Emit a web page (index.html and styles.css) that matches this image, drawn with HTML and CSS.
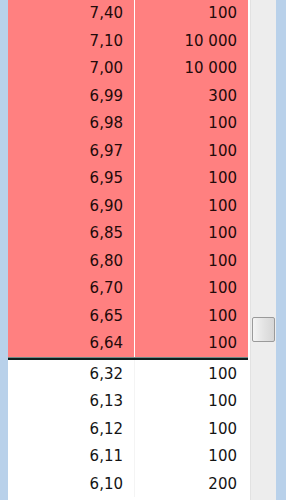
FILE: index.html
```html
<!DOCTYPE html>
<html lang="ru">
<head>
    <meta charset="UTF-8">
    <meta name="viewport" content="width=device-width, initial-scale=1.0">
    <title>Стакан</title>
    <link rel="stylesheet" href="styles.css">
</head>
<body>
    <div class="frame">
        <div class="book">
            <div class="rows asks">
                <div class="row"><span>7,40</span><span>100</span></div>
                <div class="row"><span>7,10</span><span>10 000</span></div>
                <div class="row"><span>7,00</span><span>10 000</span></div>
                <div class="row"><span>6,99</span><span>300</span></div>
                <div class="row"><span>6,98</span><span>100</span></div>
                <div class="row"><span>6,97</span><span>100</span></div>
                <div class="row"><span>6,95</span><span>100</span></div>
                <div class="row"><span>6,90</span><span>100</span></div>
                <div class="row"><span>6,85</span><span>100</span></div>
                <div class="row"><span>6,80</span><span>100</span></div>
                <div class="row"><span>6,70</span><span>100</span></div>
                <div class="row"><span>6,65</span><span>100</span></div>
                <div class="row"><span>6,64</span><span>100</span></div>
            </div>
            <div class="spread"></div>
            <div class="rows bids">
                <div class="row"><span>6,32</span><span>100</span></div>
                <div class="row"><span>6,13</span><span>100</span></div>
                <div class="row"><span>6,12</span><span>100</span></div>
                <div class="row"><span>6,11</span><span>100</span></div>
                <div class="row"><span>6,10</span><span>200</span></div>
            </div>
        </div>
        <div class="scrollbar">
            <div class="thumb"></div>
        </div>
    </div>
</body>
</html>
```
FILE: styles.css
```css
body {
    margin: 0;
    height: 500px;
    overflow: hidden;
    background-color: #b9d1ea;
    font-family: "DejaVu Sans", Verdana, sans-serif;
    font-size: 15px;
    color: #141414;
}
.frame {
    display: flex;
    margin-left: 8px;
    width: 268px;
    height: 500px;
    background-color: #fff;
}
.book {
    width: 240px;
    margin-top: -1px;
}
.row {
    display: grid;
    grid-template-columns: 127px 113px;
    height: 27.5px;
}
.row span {
    text-align: right;
    padding: 1px 11px 0 0;
    line-height: 26.5px;
}
.row span:first-child {
    border-right: 1px solid #fff;
}
.asks .row {
    background-color: #ff8080;
    color: #220a0a;
}
.bids .row span:first-child {
    border-right-color: #f4f4f4;
}
/* граница между продажей и покупкой */
.spread {
    height: 1px;
    background-color: #6f8a86;
    border-bottom: 2px solid #0f1f1f;
}
.scrollbar {
    position: relative;
    width: 26px;
    margin-left: 2px;
    background-color: #ededed;
    border-left: 1px solid #e2e2e2;
    box-sizing: border-box;
}
.thumb {
    position: absolute;
    left: 1px;
    top: 317px;
    width: 23px;
    height: 25px;
    box-sizing: border-box;
    border: 1px solid #9a9a9a;
    border-radius: 2px;
    background: linear-gradient(to right, #f4f4f4, #e2e2e2 55%, #d6d6d6);
}
```
